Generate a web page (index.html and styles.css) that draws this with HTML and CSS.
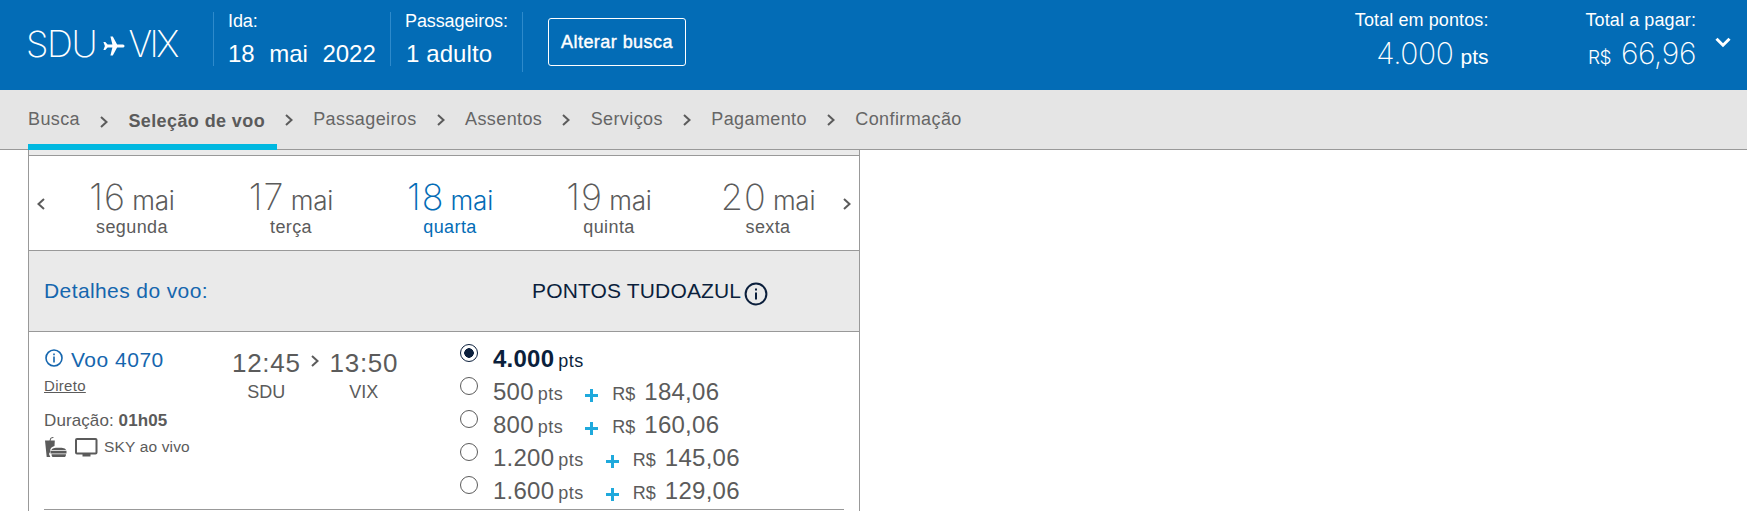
FILE: index.html
```html
<!DOCTYPE html>
<html lang="pt-BR">
<head>
    <meta charset="UTF-8">
    <meta name="viewport" content="width=device-width, initial-scale=1.0">
    <title>Seleção de voo</title>
    <link rel="stylesheet" href="styles.css">
</head>
<body>
    <header class="header">
        <div class="route">
            <span>SDU</span>
            <svg class="plane" width="22" height="20" viewBox="0 0 22 20"><path d="M21.500 10c0-1-.9-1.500-2.200-1.500h-5.200L9.800.5H7.400l2 8H4.600L2.300 6H.4l1.500 4-1.500 4h1.900l2.300-2.500h4.800l-2 8h2.400l4.300-8h5.200c1.300 0 2.200-.5 2.200-1.500z"/></svg>
            <span class="dest">VIX</span>
        </div>
        <div class="info info-date">
            <div class="label">Ida:</div>
            <div class="value"><span>18</span><span>mai</span><span>2022</span></div>
        </div>
        <div class="info info-pax">
            <div class="label">Passageiros:</div>
            <div class="value">1 adulto</div>
        </div>
        <div class="change"><button class="change-btn">Alterar busca</button></div>
        <div class="total total-points">
            <div class="label">Total em pontos:</div>
            <div class="amount"><span class="thin">4.000</span><span class="unit">pts</span></div>
        </div>
        <div class="total total-pay">
            <div class="label">Total a pagar:</div>
            <div class="amount"><span class="currency">R$</span><span class="thin">66,96</span></div>
        </div>
        <svg class="toggle" width="16" height="11" viewBox="0 0 16 11"><path d="M1.500 1.700L8 8.200l6.500-6.500"/></svg>
    </header>

    <nav class="steps">
        <div class="done">
            <span>Busca</span>
            <svg class="chevron low" viewBox="0 0 8 12"><path d="M1 1l5.500 5L1 11"/></svg>
            <span class="active">Seleção de voo</span>
        </div>
        <svg class="chevron" viewBox="0 0 8 12"><path d="M1 1l5.500 5L1 11"/></svg>
        <span>Passageiros</span>
        <svg class="chevron" viewBox="0 0 8 12"><path d="M1 1l5.500 5L1 11"/></svg>
        <span>Assentos</span>
        <svg class="chevron" viewBox="0 0 8 12"><path d="M1 1l5.500 5L1 11"/></svg>
        <span>Serviços</span>
        <svg class="chevron" viewBox="0 0 8 12"><path d="M1 1l5.500 5L1 11"/></svg>
        <span>Pagamento</span>
        <svg class="chevron" viewBox="0 0 8 12"><path d="M1 1l5.500 5L1 11"/></svg>
        <span>Confirmação</span>
    </nav>

    <main class="panel">
        <div class="strip"></div>
        <div class="days">
            <svg class="chevron" viewBox="0 0 8 12"><path d="M7 1L1.500 6 7 11"/></svg>
            <div class="day"><div class="date"><span class="thin">16</span> <span class="month">mai</span></div><div class="weekday">segunda</div></div>
            <div class="day"><div class="date"><span class="thin">17</span> <span class="month">mai</span></div><div class="weekday">terça</div></div>
            <div class="day selected"><div class="date"><span class="thin">18</span> <span class="month">mai</span></div><div class="weekday">quarta</div></div>
            <div class="day"><div class="date"><span class="thin">19</span> <span class="month">mai</span></div><div class="weekday">quinta</div></div>
            <div class="day"><div class="date"><span class="thin">20</span> <span class="month">mai</span></div><div class="weekday">sexta</div></div>
            <svg class="chevron next" viewBox="0 0 8 12"><path d="M1 1l5.500 5L1 11"/></svg>
        </div>
        <div class="columns">
            <div class="details">Detalhes do voo:</div>
            <div class="points">PONTOS TUDOAZUL</div>
            <svg class="points-icon" width="24" height="24" viewBox="0 0 24 24"><circle cx="12" cy="12" r="10.400"/><path d="M12 6.500v2M12 10.500v7"/></svg>
        </div>
        <div class="flight">
            <div class="summary">
                <div class="number">
                    <svg width="18" height="18" viewBox="0 0 18 18"><circle cx="9" cy="9" r="8"/><path d="M9 4.500v1.800M9 7.500v6"/></svg>
                    <span>Voo 4070</span>
                </div>
                <div class="stops">Direto</div>
                <div class="duration">Duração: <b>01h05</b></div>
                <div class="services">
                    <svg class="snack" width="22" height="21" viewBox="0 0 22 21"><path d="M0 3.500h9.800l-.3 5.500C6 10 5 12 5.300 14.500L4 17l1.300 3H1.700z"/><path class="line" d="M5 4L5.700 1.200 8.500.3"/><path d="M6.500 13c.3-1.700 3-2.300 7.200-2.300s7 .6 7.300 2.300zM5.500 13.800H21.500v2.600H5.500zM6.500 17.200h14.500c0 2-.8 2.800-2 2.800H8.500c-1.200 0-2-.8-2-2.800z"/></svg>
                    <svg class="tv" width="23" height="19" viewBox="0 0 23 19"><rect x="1" y="1" width="20.500" height="14.500" rx="1"/><path d="M7.500 15.500h8v3h-8z"/></svg>
                    <span>SKY ao vivo</span>
                </div>
            </div>
            <div class="schedule">
                <div class="stop"><div class="time">12:45</div><div class="airport">SDU</div></div>
                <svg class="chevron" viewBox="0 0 8 12"><path d="M1 1l5.500 5L1 11"/></svg>
                <div class="stop"><div class="time">13:50</div><div class="airport">VIX</div></div>
            </div>
            <div class="fares">
                <label class="fare chosen"><input type="radio" name="fare" checked><span class="num">4.000</span><span class="pts">pts</span></label>
                <label class="fare"><input type="radio" name="fare"><span class="num">500</span><span class="pts">pts</span><i class="plus"></i><span class="cur">R$</span><span class="num">184,06</span></label>
                <label class="fare"><input type="radio" name="fare"><span class="num">800</span><span class="pts">pts</span><i class="plus"></i><span class="cur">R$</span><span class="num">160,06</span></label>
                <label class="fare"><input type="radio" name="fare"><span class="num">1.200</span><span class="pts">pts</span><i class="plus"></i><span class="cur">R$</span><span class="num">145,06</span></label>
                <label class="fare"><input type="radio" name="fare"><span class="num">1.600</span><span class="pts">pts</span><i class="plus"></i><span class="cur">R$</span><span class="num">129,06</span></label>
            </div>
        </div>
    </main>
</body>
</html>
```
FILE: styles.css
```css
* {
    box-sizing: border-box;
}

body {
    margin: 0;
    height: 511px;
    overflow: hidden;
    background: #fff;
    color: #5b5b5b;
    font-family: "Liberation Sans", Arial, sans-serif;
    font-size: 18px;
}

svg {
    display: block;
    flex: none;
}

.thin {
    font-family: Inter, sans-serif;
    font-weight: 250;
}

/* header */
.header {
    display: flex;
    height: 90px;
    background: #036cb6;
    color: #fff;
    white-space: nowrap;
}

.route {
    display: flex;
    width: 213px;
    padding: 22px 0 0 26px;
    font: 200 36px/44px Inter, sans-serif;
    letter-spacing: -1.3px;
}

.plane {
    margin: 14px 3px 0 7px;
    fill: #fff;
}

.dest {
    letter-spacing: -2.5px;
}

.info {
    height: 54px;
    margin-top: 12px;
    padding-left: 14px;
    border-left: 1px solid #2e8acb;
}

.info-date {
    width: 177px;
}

.info-pax {
    width: 132px;
}

.label {
    line-height: 18px;
    letter-spacing: -0.1px;
}

.value {
    display: flex;
    gap: 14.5px;
    margin-top: 11px;
    font-size: 24px;
    line-height: 26px;
}

.info-pax .value {
    padding-left: 1px;
    letter-spacing: 0.1px;
}

.change {
    height: 60px;
    margin-top: 12px;
    padding: 6px 0 0 25px;
    border-left: 1px solid #2e8acb;
}

.change-btn {
    width: 138px;
    height: 48px;
    padding: 0;
    border: 1px solid #fff;
    border-radius: 3px;
    background: none;
    color: #fff;
    font: 18px "Liberation Sans", Arial, sans-serif;
    letter-spacing: 0.45px;
    -webkit-text-stroke: 0.4px #fff;
}

.total {
    padding-top: 11px;
    text-align: right;
}

.total-points {
    margin-left: auto;
}

.total-pay {
    margin-left: 97px;
}

.total .label {
    letter-spacing: 0.1px;
}

.amount {
    display: flex;
    justify-content: flex-end;
    align-items: baseline;
    margin-top: 6px;
    line-height: 36px;
}

.amount .thin {
    font-size: 30px;
    letter-spacing: -0.4px;
}

.unit {
    margin-left: 7px;
    font-size: 21px;
}

.currency {
    margin-right: 10px;
    font: 300 19px/36px Inter, sans-serif;
    letter-spacing: -0.5px;
}

.toggle {
    margin: 37px 16px 0 19px;
    fill: none;
    stroke: #fff;
    stroke-width: 3;
}

/* steps */
.chevron {
    width: 8px;
    height: 12px;
    fill: none;
    stroke: #5b5b5b;
    stroke-width: 2;
}

.steps {
    display: flex;
    height: 60px;
    padding-left: 28px;
    border-bottom: 1px solid #999;
    background: #e5e5e5;
    line-height: 58px;
    letter-spacing: 0.4px;
    color: #666;
}

.steps .chevron {
    margin: 24px 20.2px 0;
}

.steps .low {
    margin-top: 26px;
}

.done {
    display: flex;
    width: 249px;
    height: 60px;
    border-bottom: 6px solid #00b8e0;
}

.steps .done + .chevron {
    margin-left: 8px;
}

.active {
    font-weight: bold;
    line-height: 62px;
    color: #5b5b5b;
}

/* panel */
.panel {
    width: 832px;
    height: 361px;
    margin-left: 28px;
    border: 1px solid #999;
    border-width: 0 1px;
}

.strip {
    height: 6px;
    border-bottom: 1px solid #999;
    background: #ebebeb;
}

.days {
    display: flex;
    height: 95px;
    padding: 0 8px;
    border-bottom: 1px solid #999;
}

.days .chevron {
    margin-top: 42px;
}

.days .next {
    margin-left: auto;
}

.day {
    width: 159px;
    padding: 22px 0 0 15px;
    text-align: center;
}

.selected {
    color: #036cb6;
}

.date {
    height: 43px;
    line-height: 38px;
    font-size: 26px;
}

.date .thin {
    font-size: 36px;
    letter-spacing: 1px;
}

.month {
    margin-left: -1px;
    font: 300 26px/38px Inter, sans-serif;
    letter-spacing: -0.2px;
}

.weekday {
    line-height: 12px;
    letter-spacing: 0.4px;
}

.columns {
    display: flex;
    height: 81px;
    padding-left: 15px;
    border-bottom: 1px solid #999;
    background: #eaeaea;
    font-size: 21px;
    line-height: 80px;
}

.details {
    width: 488px;
    letter-spacing: 0.4px;
    color: #1566ae;
}

.points {
    letter-spacing: 0.15px;
    color: #0b1f3c;
}

.points-icon {
    margin: 31px 0 0 3px;
    fill: none;
    stroke: #0b1f3c;
    stroke-width: 2;
}

/* flight */
.flight {
    display: flex;
    height: 178px;
    margin: 0 15px;
    border-bottom: 1px solid #999;
}

.summary {
    width: 188px;
}

.number {
    display: flex;
    gap: 8px;
    margin-top: 15px;
    color: #1566ae;
    font-size: 21px;
    line-height: 26px;
    letter-spacing: 0.5px;
}

.number svg {
    margin: 2px 0 0 1px;
    fill: none;
    stroke: #1566ae;
    stroke-width: 1.6;
}

.stops {
    margin-top: 4px;
    font-size: 15px;
    line-height: 18px;
    letter-spacing: 0.3px;
    text-decoration: underline;
}

.duration {
    margin-top: 16px;
    font-size: 17px;
    line-height: 20px;
    letter-spacing: 0.1px;
}

.services {
    display: flex;
    margin-top: 6px;
    font-size: 15.5px;
    line-height: 20px;
    letter-spacing: 0.15px;
}

.snack {
    margin: 0 8px 0 1px;
    fill: #5b5b5b;
}

.snack .line {
    fill: none;
    stroke: #5b5b5b;
}

.tv {
    margin: 1px 6px 0 0;
    fill: #5b5b5b;
}

.tv rect {
    fill: none;
    stroke: #5b5b5b;
    stroke-width: 2;
}

.schedule {
    display: flex;
    width: 228px;
    padding-top: 18px;
}

.schedule .chevron {
    margin: 5px 11px 0 10px;
}

.stop {
    text-align: center;
}

.time {
    font-size: 26px;
    line-height: 26px;
    letter-spacing: 0.7px;
}

.airport {
    margin-top: 6px;
    line-height: 20px;
}

.fares {
    padding-top: 12px;
}

.fare {
    display: flex;
    align-items: baseline;
    height: 33px;
    line-height: 30px;
}

.fare input {
    appearance: none;
    align-self: flex-start;
    width: 18px;
    height: 18px;
    margin: 0 15px 0 0;
    border: 1px solid #5b5b5b;
    border-radius: 50%;
}

.fare input:checked {
    border-color: #0b1f3c;
    background: radial-gradient(circle, #0b1f3c 4.500px, #fff 5px);
}

.num {
    font-size: 24px;
    letter-spacing: 0.25px;
}

.pts {
    margin-left: 4px;
    font-size: 18px;
    letter-spacing: 0.5px;
}

.chosen {
    color: #0b1f3c;
}

.chosen .num {
    font-weight: bold;
}

.plus {
    align-self: flex-start;
    width: 13px;
    height: 13px;
    margin: 12px 14px 0 22px;
    background: linear-gradient(#1fa9dc, #1fa9dc) center / 13px 3px no-repeat, linear-gradient(#1fa9dc, #1fa9dc) center / 3px 13px no-repeat;
}

.cur {
    margin-right: 9px;
    font-size: 18px;
}
```
